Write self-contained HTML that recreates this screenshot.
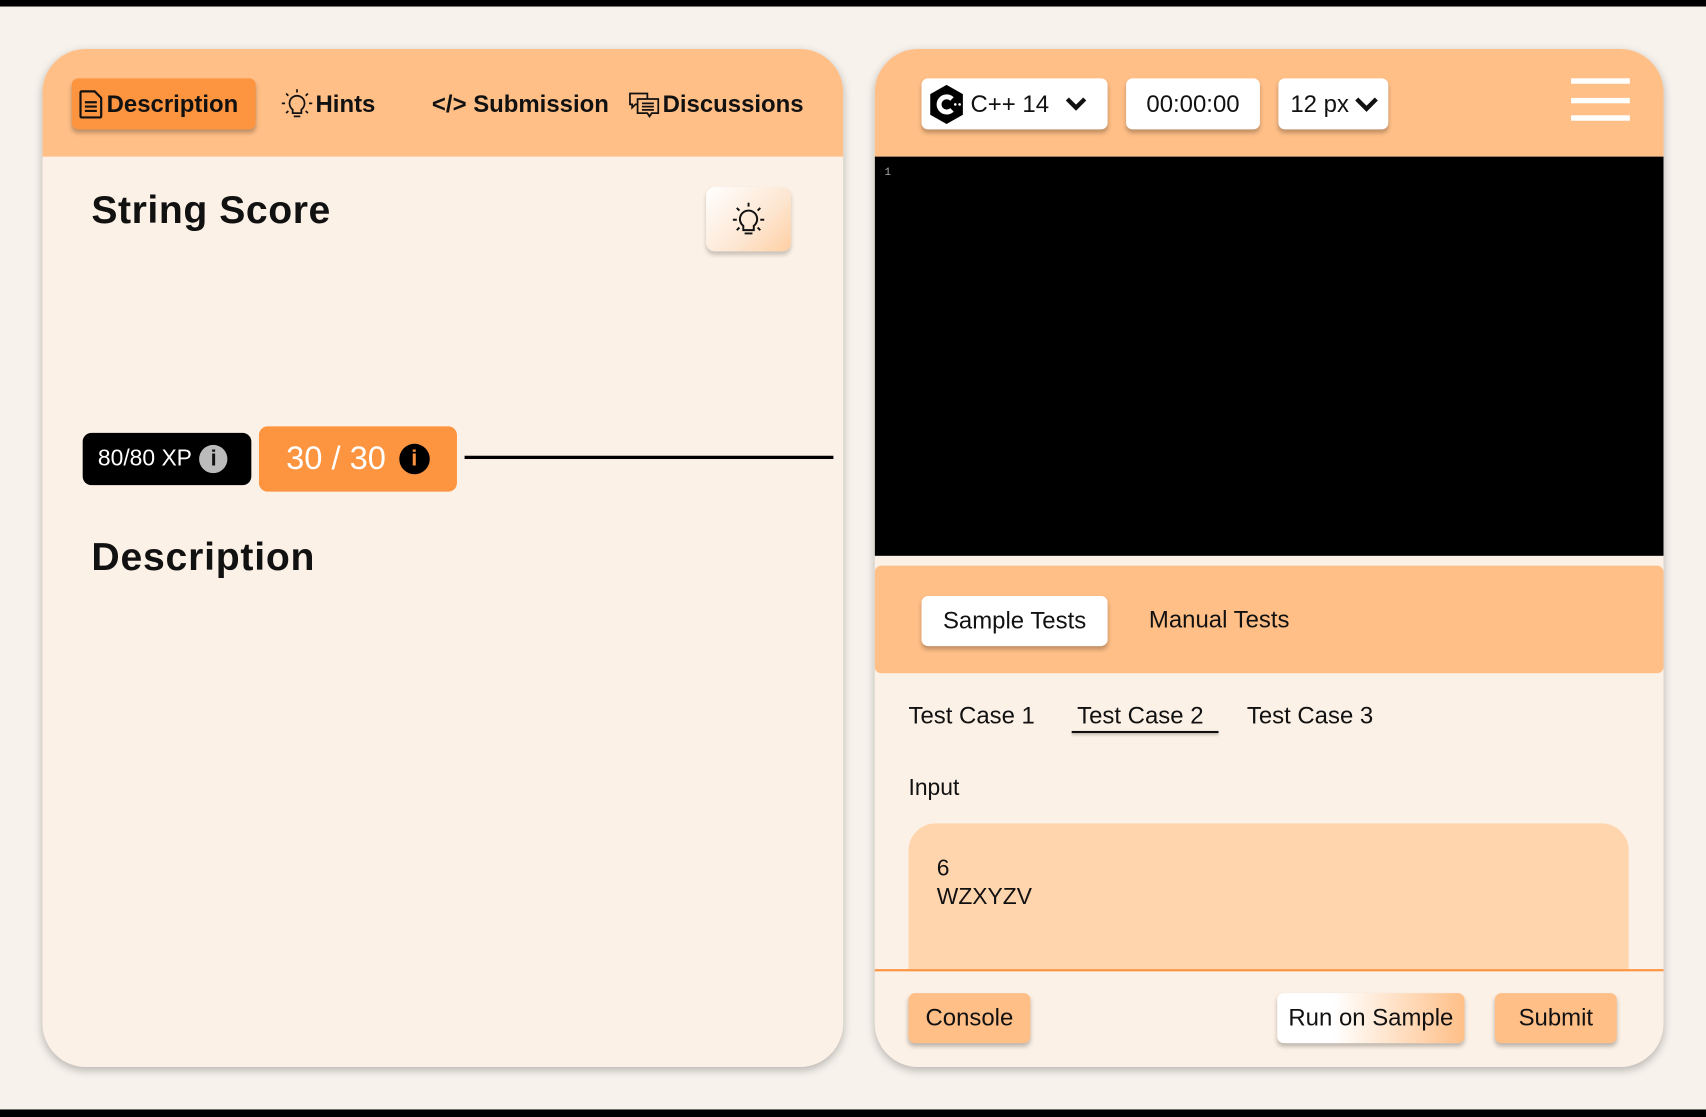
<!DOCTYPE html>
<html><head><meta charset="utf-8"><style>
html,body{margin:0;padding:0;width:1706px;height:1117px;overflow:hidden;background:#f7f2ec;font-family:"Liberation Sans",Arial,sans-serif;}
#w{position:absolute;left:0;top:0;width:1568px;height:1027px;transform:scale(1.088,1.0877);transform-origin:0 0;}
.a{position:absolute;}
.bar{background:#000;left:0;width:1568px;}
.panel{position:absolute;top:45px;height:936px;border-radius:40px;background:#fcf1e6;overflow:hidden;box-shadow:0 3px 8px rgba(0,0,0,.25);}
.hdr{position:absolute;left:0;top:0;right:0;height:99px;background:#ffbf87;}
.tab{position:absolute;top:72px;height:47px;font-size:22px;font-weight:bold;line-height:47px;color:#111;display:flex;align-items:center;gap:2px;}
.btnw{position:absolute;background:#fff;border-radius:6px;box-shadow:0 3px 4px rgba(0,0,0,.25);font-size:22px;display:flex;align-items:center;justify-content:center;color:#111;}
.tc{position:absolute;top:645px;font-size:22px;color:#111;}
</style></head><body><div id="w">
<div class="a bar" style="top:0;height:6px"></div>
<div class="a bar" style="top:1020px;height:7px"></div>

<div class="panel" style="left:39px;width:736px">
 <div class="hdr"></div>
</div>
<div class="tab" style="left:66px;width:169px;background:#fd9440;border-radius:6px;box-shadow:0 3px 4px rgba(0,0,0,.25);padding-left:6px;box-sizing:border-box">
 <svg width="24" height="28" viewBox="0 0 24 28"><path d="M3 2h12l6 6v17a1 1 0 0 1-1 1H3a1 1 0 0 1-1-1V3a1 1 0 0 1 1-1z" fill="none" stroke="#111" stroke-width="2"/><path d="M6 12h11M6 16h11M6 20h11" stroke="#111" stroke-width="2"/></svg>Description</div>
<div class="tab" style="left:258px">
 <svg width="30" height="30" viewBox="0 0 30 30" fill="none" stroke="#111" stroke-width="1.6"><path d="M15 7a7 7 0 0 0-4 12.7V23h8v-3.3A7 7 0 0 0 15 7z"/><path d="M12 26h6M15 1v3M5 5l2 2M25 5l-2 2M1 14h3M26 14h3M5 23l2-2M25 23l-2-2"/></svg>Hints</div>
<div class="tab" style="left:397px">&lt;/&gt; Submission</div>
<div class="tab" style="left:577px">
 <svg width="30" height="28" viewBox="0 0 30 28" fill="none" stroke="#111" stroke-width="1.6"><path d="M2 4h16v10H7l-3 3v-3H2z"/><path d="M9 9h19v13h-6l-2 3-2-3H9z" fill="#ffbf87"/><path d="M13 13h11M13 16h11M13 19h11"/></svg>Discussions</div>
<div class="a" style="left:84px;top:172px;font-size:36px;font-weight:bold;color:#111;letter-spacing:0.5px">String Score</div>
<div class="a" style="left:649px;top:172px;width:78px;height:59px;border-radius:8px;background:linear-gradient(135deg,#fff 0%,#fde6d1 60%,#ffcfa3 100%);box-shadow:0 3px 4px rgba(0,0,0,.2);display:flex;align-items:center;justify-content:center">
 <svg width="36" height="36" viewBox="0 0 30 30" fill="none" stroke="#111" stroke-width="1.5"><path d="M15 8a6.5 6.5 0 0 0-4 11.7V23h8v-3.3A6.5 6.5 0 0 0 15 8z"/><path d="M12 25.5h6M15 2v3M6 6l2 2M24 6l-2 2M3 15h3M24 15h3M6 23l2-2M24 23l-2-2"/></svg></div>
<div class="a" style="left:76px;top:398px;width:155px;height:48px;background:#000;border-radius:8px;color:#fff;font-size:21px;display:flex;align-items:center;padding-left:14px;box-sizing:border-box">80/80 XP<span style="display:inline-block;width:26px;height:26px;border-radius:50%;background:#bbb;color:#111;font-weight:bold;text-align:center;line-height:26px;margin-left:7px;font-size:20px">i</span></div>
<div class="a" style="left:238px;top:392px;width:182px;height:60px;background:#fd9440;border-radius:8px;color:#fff;font-size:30px;display:flex;align-items:center;padding-left:25px;box-sizing:border-box">30 / 30<span style="display:inline-block;width:28px;height:28px;border-radius:50%;background:#000;color:#fd9440;font-weight:bold;text-align:center;line-height:28px;margin-left:12px;font-size:20px">i</span></div>
<div class="a" style="left:427px;top:419px;width:339px;height:3px;background:#000"></div>
<div class="a" style="left:84px;top:491px;font-size:36px;font-weight:bold;color:#111;letter-spacing:0.7px">Description</div>

<div class="panel" style="left:804px;width:725px">
 <div class="hdr"></div>
 <div class="a" style="left:0;top:99px;width:725px;height:367px;background:#000"></div>
 <div class="a" style="left:9px;top:109px;color:#aaa;font-size:10px;font-family:'Liberation Mono',monospace">1</div>
 <div class="a" style="left:0;top:475px;width:725px;height:99px;background:#ffbf87;border-radius:6px"></div>
 <div class="a" style="left:31px;top:712px;width:662px;height:134px;background:#ffd5ae;border-radius:25px 25px 0 0"></div>
 <div class="a" style="left:0;top:846px;width:725px;height:2px;background:#fd9440"></div>
</div>
<div class="btnw" style="left:847px;top:72px;width:171px;height:47px;justify-content:flex-start;padding-left:6px;box-sizing:border-box">
 <svg width="34" height="38" viewBox="0 0 34 38"><path d="M17 1l15 8.5v19L17 37 2 28.5v-19z" fill="#000"/><path d="M22 14a7 7 0 1 0 0 10" fill="none" stroke="#fff" stroke-width="4.5"/><circle cx="25" cy="19" r="1.2" fill="#fff"/><circle cx="29" cy="19" r="1.2" fill="#fff"/></svg>
 <span style="margin-left:5px">C++ 14</span>
 <svg style="margin-left:14px" width="22" height="16" viewBox="0 0 22 16"><path d="M3 3l8 8 8-8" fill="none" stroke="#111" stroke-width="4"/></svg></div>
<div class="btnw" style="left:1035px;top:72px;width:123px;height:47px">00:00:00</div>
<div class="btnw" style="left:1175px;top:72px;width:101px;height:47px;justify-content:flex-start;padding-left:11px;box-sizing:border-box">12 px<svg style="margin-left:4px" width="24" height="16" viewBox="0 0 24 16"><path d="M3 3l9 9 9-9" fill="none" stroke="#111" stroke-width="4"/></svg></div>
<div class="a" style="left:1444px;top:72px;width:54px;height:5px;background:#fff"></div>
<div class="a" style="left:1444px;top:90px;width:54px;height:5px;background:#fff"></div>
<div class="a" style="left:1444px;top:106px;width:54px;height:5px;background:#fff"></div>

<div class="btnw" style="left:847px;top:548px;width:171px;height:46px">Sample Tests</div>
<div class="a" style="left:1056px;top:557px;font-size:22px;color:#111">Manual Tests</div>
<div class="tc" style="left:835px">Test Case 1</div>
<div class="tc" style="left:990px">Test Case 2</div>
<div class="a" style="left:985px;top:672px;width:135px;height:2px;background:#111;box-shadow:0 2px 2px rgba(0,0,0,.2)"></div>
<div class="tc" style="left:1146px">Test Case 3</div>
<div class="a" style="left:835px;top:713px;font-size:21px;color:#111">Input</div>
<div class="a" style="left:861px;top:786px;font-size:21px;line-height:26px;color:#111">6<br>WZXYZV</div>
<div class="btnw" style="left:835px;top:913px;width:112px;height:46px;background:#ffbf87">Console</div>
<div class="btnw" style="left:1174px;top:913px;width:172px;height:46px;background:linear-gradient(90deg,#fff 0%,#fff 30%,#ffbf87 100%)">Run on Sample</div>
<div class="btnw" style="left:1374px;top:913px;width:112px;height:46px;background:#ffbf87">Submit</div>
</div></body></html>
